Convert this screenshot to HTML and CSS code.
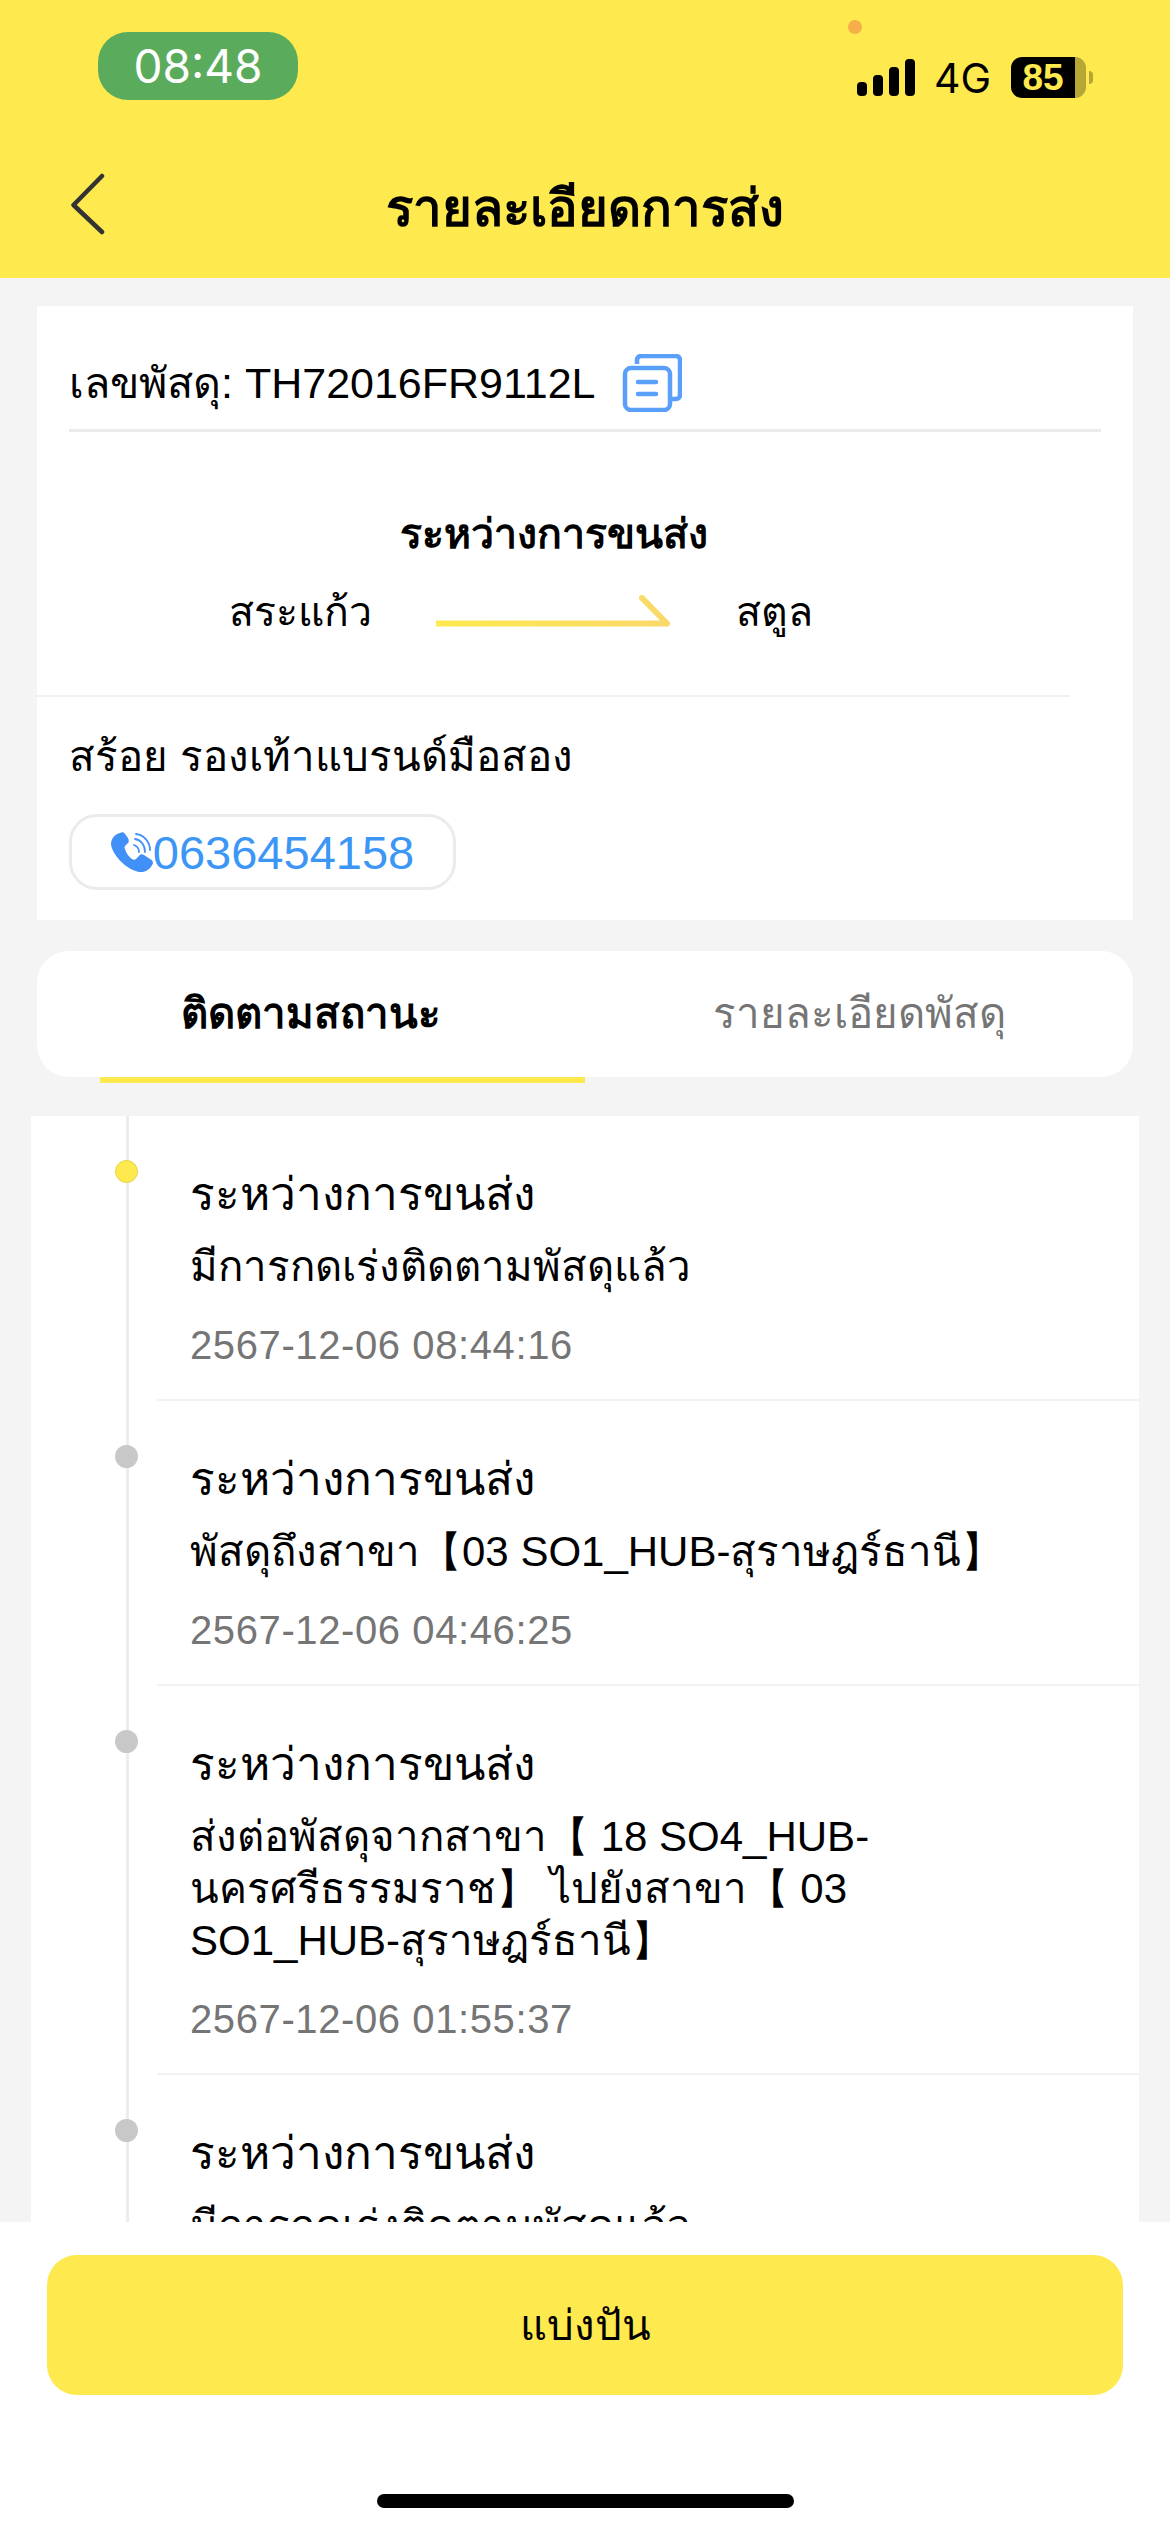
FILE: index.html
```html
<!DOCTYPE html>
<html lang="th">
<head>
    <meta charset="UTF-8">
    <meta name="viewport" content="width=device-width, initial-scale=1.0">
    <title>รายละเอียดการส่ง</title>
    <link rel="stylesheet" href="styles.css">
</head>
<body>
    <div class="page">
        <header class="header">
            <div class="status-bar">
                <div class="time">08:48</div>
                <span class="mic-dot"></span>
                <div class="status-icons">
                    <div class="signal"><i class="b1"></i><i class="b2"></i><i class="b3"></i><i class="b4"></i></div>
                    <span class="network">4G</span>
                    <div class="battery"><span class="battery-level">85</span><span class="battery-rest"></span></div>
                    <span class="battery-tip"></span>
                </div>
            </div>
            <div class="nav">
                <svg class="back" viewBox="0 0 36 66" width="36" height="66">
                    <path d="M32 3 L3.500 32 L32 59" fill="none" stroke="#333" stroke-width="4.500" stroke-linecap="round" stroke-linejoin="round"/>
                </svg>
                <h1>รายละเอียดการส่ง</h1>
            </div>
        </header>

        <main class="content">
            <section class="summary">
                <div class="tracking">
                    <span>เลขพัสดุ: TH72016FR9112L</span>
                    <svg class="copy" viewBox="0 0 60 58" width="60" height="58">
                        <path d="M15 10 V6 a4 4 0 0 1 4 -4 H54 a4 4 0 0 1 4 4 V41 a4 4 0 0 1 -4 4 H49" fill="none" stroke="#5a9ffa" stroke-width="4.500"/>
                        <rect x="3" y="14" width="45" height="42" rx="6" fill="none" stroke="#5a9ffa" stroke-width="4.500"/>
                        <path d="M16 28 H34 M16 40 H34" stroke="#5a9ffa" stroke-width="4.500" stroke-linecap="round"/>
                    </svg>
                </div>
                <div class="route">
                    <div class="route-status">ระหว่างการขนส่ง</div>
                    <div class="route-line">
                        <span class="route-from">สระแก้ว</span>
                        <svg class="route-arrow" viewBox="0 0 236 34" width="236" height="34">
                            <defs>
                                <linearGradient id="arrowFill" x1="0" x2="1" y1="0" y2="0">
                                    <stop offset="0" stop-color="#fee94e"/>
                                    <stop offset="1" stop-color="#f9d969"/>
                                </linearGradient>
                            </defs>
                            <path d="M0 28.500 H231 L206 3 L231 28.500" fill="none" stroke="url(#arrowFill)" stroke-width="6" stroke-linejoin="round" stroke-linecap="round"/>
                        </svg>
                        <span class="route-to">สตูล</span>
                    </div>
                </div>
                <div class="sender">
                    <div class="sender-name">สร้อย รองเท้าแบรนด์มือสอง</div>
                    <div class="phone">
                        <svg class="phone-icon" viewBox="0 0 42 40" width="42" height="40">
                            <path d="M9 1 C4 2 0 7 0 12 C1 22 14 37 28 40 C34 41 40 37 42 31 C42 29 41 28 39 27 L33 23 C31 22 29 22 28 24 L25 27 C24 28 22 28 21 27 C18 25 15 21 14 17 C13 15 14 14 15 13 L17 11 C18 10 18 8 17 6 L14 2 C13 0 11 0 9 1 Z" fill="#4090f8"/>
                            <path d="M23 13 C26 14 28 16 28 20 M24 7 C30 8 34 13 34 20 M25 2 C33 3 39 10 39 18" fill="none" stroke="#4090f8" stroke-width="1.800" stroke-linecap="round"/>
                        </svg>
                        <span>0636454158</span>
                    </div>
                </div>
            </section>

            <nav class="tabs">
                <div class="tab active">ติดตามสถานะ</div>
                <div class="tab">รายละเอียดพัสดุ</div>
            </nav>

            <section class="timeline">
                <div class="track">
                    <div class="item">
                        <span class="dot current"></span>
                        <div class="item-title">ระหว่างการขนส่ง</div>
                        <div class="item-desc">มีการกดเร่งติดตามพัสดุแล้ว</div>
                        <div class="item-time">2567-12-06 08:44:16</div>
                    </div>
                    <div class="item">
                        <span class="dot"></span>
                        <div class="item-title">ระหว่างการขนส่ง</div>
                        <div class="item-desc">พัสดุถึงสาขา【03 SO1_HUB-สุราษฎร์ธานี】</div>
                        <div class="item-time">2567-12-06 04:46:25</div>
                    </div>
                    <div class="item">
                        <span class="dot"></span>
                        <div class="item-title">ระหว่างการขนส่ง</div>
                        <div class="item-desc">ส่งต่อพัสดุจากสาขา【 18 SO4_HUB-<br>นครศรีธรรมราช】 ไปยังสาขา【 03<br>SO1_HUB-สุราษฎร์ธานี】</div>
                        <div class="item-time">2567-12-06 01:55:37</div>
                    </div>
                    <div class="item">
                        <span class="dot"></span>
                        <div class="item-title">ระหว่างการขนส่ง</div>
                        <div class="item-desc">มีการกดเร่งติดตามพัสดุแล้ว</div>
                    </div>
                </div>
            </section>
        </main>

        <footer class="footer">
            <button class="share" type="button">แบ่งปัน</button>
            <div class="home-bar"></div>
        </footer>
    </div>
</body>
</html>
```

FILE: styles.css
```css
* {
    box-sizing: border-box;
}

body {
    margin: 0;
    font-family: "Liberation Sans", "Noto Sans", sans-serif;
    color: #000;
    background-color: #f4f4f4;
}

.page {
    display: flex;
    flex-direction: column;
    height: 2532px;
    overflow: hidden;
}

/* header */
.header {
    height: 278px;
    flex: none;
    background-color: #fee94e;
}

.status-bar {
    position: relative;
    display: flex;
    justify-content: space-between;
    height: 148px;
    padding: 32px 77px 0 98px;
}

.time {
    width: 200px;
    height: 68px;
    line-height: 68px;
    text-align: center;
    font-family: Inter, sans-serif;
    font-size: 46px;
    color: #fff;
    background-color: #5bab5c;
    border-radius: 30px;
}

.mic-dot {
    position: absolute;
    left: 848px;
    top: 20px;
    width: 14px;
    height: 14px;
    border-radius: 50%;
    background-color: #f5ae4a;
}

.status-icons {
    display: flex;
    align-items: flex-end;
    height: 66px;
}

.signal {
    display: flex;
    align-items: flex-end;
    gap: 6px;
    margin-bottom: 2px;
}

.signal i {
    width: 10px;
    border-radius: 4px;
    background-color: #000;
}

.b1 { height: 14px; }
.b2 { height: 21px; }
.b3 { height: 29px; }
.b4 { height: 37px; }

.network {
    margin-left: 19px;
    font-family: Inter, sans-serif;
    font-size: 41px;
    line-height: 40px;
}

.battery {
    display: flex;
    width: 75px;
    height: 41px;
    margin-left: 20px;
    overflow: hidden;
    border-radius: 11px;
}

.battery-level {
    width: 64px;
    line-height: 41px;
    text-align: center;
    font-size: 37px;
    font-weight: bold;
    color: #fee94e;
    background-color: #000;
}

.battery-rest {
    flex: 1;
    background-color: #b5a636;
}

.battery-tip {
    width: 4px;
    height: 13px;
    margin: 0 0 14px 3px;
    border-radius: 0 7px 7px 0;
    background-color: #b5a636;
}

.nav {
    position: relative;
    display: flex;
    justify-content: center;
    align-items: center;
    height: 118px;
}

.back {
    position: absolute;
    left: 70px;
    top: 25px;
}

h1 {
    margin: 0;
    font-size: 51px;
    font-weight: bold;
}

/* content */
.content {
    flex: 1;
    min-height: 0;
    overflow: hidden;
    padding-top: 28px;
}

.summary {
    margin: 0 37px;
    height: 614px;
    background-color: #fff;
}

.tracking {
    display: flex;
    align-items: center;
    gap: 26px;
    height: 126px;
    margin: 0 32px;
    padding-top: 31px;
    font-size: 43px;
    border-bottom: 3px solid #ebebeb;
}

.route {
    height: 265px;
    margin-right: 63px;
    padding-top: 69px;
    border-bottom: 2px solid #f0f0f0;
}

.route-status {
    text-align: center;
    font-size: 41px;
    font-weight: bold;
}

.route-line {
    display: grid;
    grid-template-columns: 1fr auto 1fr;
    align-items: center;
    gap: 64px;
    margin-top: 13px;
    font-size: 41px;
}

.route-from {
    justify-self: end;
}

.sender {
    padding: 26px 32px 0;
}

.sender-name {
    font-size: 42px;
}

.phone {
    display: inline-flex;
    align-items: center;
    justify-content: center;
    width: 387px;
    height: 76px;
    margin-top: 25px;
    font-size: 47px;
    color: #3b96f5;
    border: 3px solid #ebebeb;
    border-radius: 28px;
}

.tabs {
    display: flex;
    height: 126px;
    margin: 31px 37px 0;
    background-color: #fff;
    border-radius: 32px;
}

.tab {
    position: relative;
    width: 50%;
    line-height: 126px;
    text-align: center;
    font-size: 42px;
    color: #757575;
}

.tab.active {
    font-weight: bold;
    color: #000;
}

.tab.active::after {
    content: "";
    position: absolute;
    left: 63px;
    top: 126px;
    width: 485px;
    height: 6px;
    background-color: #fee94e;
}

/* timeline */
.timeline {
    margin: 39px 31px 0;
    padding-left: 95px;
    background-color: #fff;
}

.track {
    border-left: 3px solid #ededed;
}

.item {
    position: relative;
    margin-left: 28px;
    padding: 50px 0 31px 33px;
    border-bottom: 2px solid #f2f2f2;
}

.dot {
    position: absolute;
    left: -42px;
    top: 44px;
    width: 23px;
    height: 23px;
    border-radius: 50%;
    background-color: #c8c8c8;
}

.dot.current {
    background-color: #fee94e;
    border: 1px solid #e6d24a;
}

.item-title {
    font-size: 46px;
    line-height: 56px;
}

.item-desc {
    margin-top: 19px;
    font-size: 42px;
    line-height: 52px;
}

.item-time {
    margin-top: 29px;
    font-size: 40px;
    letter-spacing: 0.600px;
    line-height: 46px;
    color: #757575;
}

/* footer */
.footer {
    flex: none;
    height: 310px;
    padding: 33px 47px 0;
    background-color: #fff;
}

.share {
    display: block;
    width: 100%;
    height: 140px;
    font-family: inherit;
    font-size: 42px;
    color: #000;
    background-color: #fee94e;
    border: none;
    border-radius: 30px;
}

.home-bar {
    width: 417px;
    height: 14px;
    margin: 99px auto 0;
    border-radius: 7px;
    background-color: #000;
}
```
